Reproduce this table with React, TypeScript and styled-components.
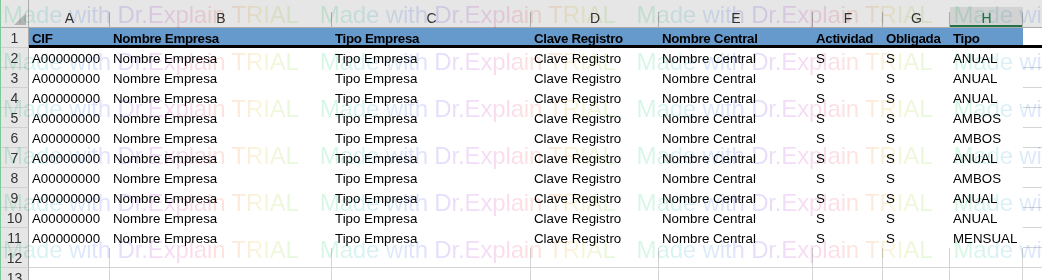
import React from 'react';
import styled, { createGlobalStyle, css } from 'styled-components';

interface Column {
  letter: string;
  width: number;
}

type CellKind = 'head' | 'headEdge' | 'data' | 'dataEdge' | 'blank';

const COLUMNS: Column[] = [
  { letter: 'A', width: 81 },
  { letter: 'B', width: 222 },
  { letter: 'C', width: 199 },
  { letter: 'D', width: 128 },
  { letter: 'E', width: 154 },
  { letter: 'F', width: 70 },
  { letter: 'G', width: 67 },
  { letter: 'H', width: 73 },
  { letter: 'I', width: 90 },
];

const SELECTED_COLUMN = 'H';

const HEADERS = ['CIF', 'Nombre Empresa', 'Tipo Empresa', 'Clave Registro', 'Nombre Central', 'Actividad', 'Obligada', 'Tipo'];

const TIPOS = ['ANUAL', 'ANUAL', 'ANUAL', 'AMBOS', 'AMBOS', 'ANUAL', 'AMBOS', 'ANUAL', 'ANUAL', 'MENSUAL'];

const rows: string[][] = TIPOS.map(tipo => [
  'A00000000',
  'Nombre Empresa',
  'Tipo Empresa',
  'Clave Registro',
  'Nombre Central',
  'S',
  'S',
  tipo,
]);

const GlobalStyle = createGlobalStyle`
  html, body {
    margin: 0;
    padding: 0;
    background: #ffffff;
  }
  body {
    font-family: 'Liberation Sans', Arial, sans-serif;
  }
`;

const Sheet = styled.div`
  position: relative;
  width: 1042px;
  height: 280px;
  overflow: hidden;
  box-sizing: border-box;
  border-left: 1px solid #7fc79a;
  background: #ffffff;
`;

const Grid = styled.div<{ $template: string }>`
  display: grid;
  width: max-content;
  grid-template-columns: ${p => p.$template};
  grid-template-rows: 28px;
  grid-auto-rows: 20px;
  font-size: 13.3px;
  color: #000000;
`;

const Corner = styled.div`
  position: relative;
  box-sizing: border-box;
  background: #e6e6e6;
  border-right: 1px solid #ababab;
  border-bottom: 1px solid #ababab;

  &::after {
    content: '';
    position: absolute;
    right: 2px;
    bottom: 2px;
    width: 0;
    height: 0;
    border-style: solid;
    border-width: 0 0 12px 12px;
    border-color: transparent transparent #b4b4b4 transparent;
  }
`;

const ColHeader = styled.div`
  position: relative;
  box-sizing: border-box;
  padding-top: 7px;
  background: #e6e6e6;
  border-bottom: 1px solid #ababab;

  &::after {
    content: '';
    position: absolute;
    right: 0;
    top: 12px;
    bottom: 0;
    width: 1px;
    background: #ababab;
  }
`;

const ColLabel = styled.div<{ $selected?: boolean }>`
  height: 20px;
  box-sizing: border-box;
  text-align: center;
  font-size: 14px;
  line-height: 23px;
  color: #333333;

  ${p =>
    p.$selected &&
    css`
      background: #d2d2d2;
      color: #217346;
      border-bottom: 2px solid #217346;
    `}
`;

const RowHeader = styled.div`
  box-sizing: border-box;
  background: #e6e6e6;
  border-right: 1px solid #ababab;
  border-bottom: 1px solid #d0d0d0;
  text-align: center;
  font-size: 14px;
  line-height: 21px;
  color: #333333;
`;

const Cell = styled.div<{ $kind: CellKind }>`
  box-sizing: border-box;
  padding-left: 3px;
  line-height: 21px;
  white-space: nowrap;
  background: #ffffff;

  ${({ $kind }) => {
    switch ($kind) {
      case 'head':
        return css`
          background: #6699cc;
          font-weight: bold;
          letter-spacing: -0.3px;
          border-bottom: 3px solid #000000;
        `;
      case 'headEdge':
        return css`
          border-bottom: 3px solid #000000;
        `;
      case 'dataEdge':
        return css`
          border-bottom: 1px solid #d4d4d4;
        `;
      case 'blank':
        return css`
          border-right: 1px solid #d4d4d4;
          border-bottom: 1px solid #d4d4d4;
        `;
      default:
        return css``;
    }
  }}
`;

const Watermark = styled.div`
  position: absolute;
  top: -9px;
  left: 2px;
  right: 0;
  bottom: 0;
  pointer-events: none;
  mix-blend-mode: multiply;
  font-family: 'Liberation Sans', Arial, sans-serif;
  font-size: 24px;
  line-height: 47px;
`;

const WatermarkLine = styled.div`
  display: flex;
  white-space: nowrap;
`;

const WatermarkText = styled.span`
  display: inline-block;
  flex: 0 0 auto;
  margin-right: 21px;
  letter-spacing: -0.15px;
  color: transparent;
  background: linear-gradient(
    90deg,
    #d6f7e3 0%,
    #d9f3f4 14%,
    #dde8fc 27%,
    #e4defb 40%,
    #f4dcf8 53%,
    #fcdde7 66%,
    #fde6da 77%,
    #faf5da 87%,
    #e3f9dc 100%
  );
  -webkit-background-clip: text;
  background-clip: text;
`;

const WATERMARK_LINES = 7;
const WATERMARK_REPEAT = 4;

const App: React.FC = () => {
  const template = ['28px', ...COLUMNS.map(c => `${c.width}px`)].join(' ');
  const dataCols = COLUMNS.length - 1;

  return (
    <>
      <GlobalStyle />
      <Sheet>
        <Grid $template={template}>
          <Corner />
          {COLUMNS.map(col => (
            <ColHeader key={col.letter}>
              <ColLabel $selected={col.letter === SELECTED_COLUMN}>{col.letter}</ColLabel>
            </ColHeader>
          ))}

          <RowHeader>1</RowHeader>
          {HEADERS.map(text => (
            <Cell key={text} $kind="head">
              {text}
            </Cell>
          ))}
          <Cell $kind="headEdge" />

          {rows.map((row, r) => (
            <React.Fragment key={r}>
              <RowHeader>{r + 2}</RowHeader>
              {row.map((text, c) => (
                <Cell key={c} $kind="data">
                  {text}
                </Cell>
              ))}
              <Cell $kind="dataEdge" />
            </React.Fragment>
          ))}

          {[12, 13].map(n => (
            <React.Fragment key={n}>
              <RowHeader>{n}</RowHeader>
              {Array.from({ length: dataCols + 1 }, (_, c) => (
                <Cell key={c} $kind="blank" />
              ))}
            </React.Fragment>
          ))}
        </Grid>

        <Watermark>
          {Array.from({ length: WATERMARK_LINES }, (_, i) => (
            <WatermarkLine key={i}>
              {Array.from({ length: WATERMARK_REPEAT }, (_, j) => (
                <WatermarkText key={j}>Made with Dr.Explain TRIAL</WatermarkText>
              ))}
            </WatermarkLine>
          ))}
        </Watermark>
      </Sheet>
    </>
  );
};

export default App;
